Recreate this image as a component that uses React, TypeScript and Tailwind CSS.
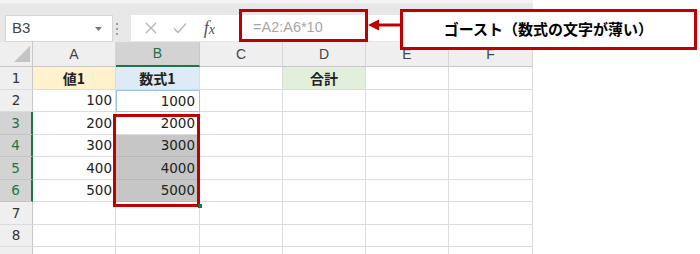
import React from "react";

const RED = "border-[#c00000]";

type Row = {
  n: number;
  h: string;
  a?: string;
  b?: string;
  d?: string;
};

const rows: Row[] = [
  { n: 1, h: "h-[23px]", a: "値1", b: "数式1", d: "合計" },
  { n: 2, h: "h-[22px]", a: "100", b: "1000" },
  { n: 3, h: "h-[23px]", a: "200", b: "2000" },
  { n: 4, h: "h-[22px]", a: "300", b: "3000" },
  { n: 5, h: "h-[23px]", a: "400", b: "4000" },
  { n: 6, h: "h-[22px]", a: "500", b: "5000" },
  { n: 7, h: "h-[23px]" },
  { n: 8, h: "h-[22px]" },
  { n: 9, h: "h-[22px]" },
];

const colHeaders = ["A", "B", "C", "D", "E", "F"];

const NameBox = () => (
  <div className="ml-[5px] mt-[12px] w-[108px] h-[27px] bg-white border border-[#d6d6d6] flex items-center justify-between pl-[6px] pr-[10px]">
    <span className="font-['Liberation_Sans',sans-serif] text-[15px] text-[#444]">B3</span>
    <svg width="7" height="4" viewBox="0 0 7 4">
      <path d="M0 0 L7 0 L3.5 4 Z" fill="#777" />
    </svg>
  </div>
);

const FormulaBar = () => (
  <div className="ml-[13px] mt-[12px] w-[397px] h-[26px] bg-white flex items-center">
    <div className="w-[92px] flex items-center justify-around pl-[6px]">
      <svg width="12" height="12" viewBox="0 0 12 12">
        <path d="M1 1 L11 11 M11 1 L1 11" stroke="#b4b4b4" strokeWidth="1.3" fill="none" />
      </svg>
      <svg width="14" height="12" viewBox="0 0 14 12">
        <path d="M1 6.5 L5 10.5 L13 1.5" stroke="#b4b4b4" strokeWidth="1.3" fill="none" />
      </svg>
      <span className="font-['Liberation_Serif',serif] italic text-[18px] text-[#555] leading-none">
        f<span className="text-[14px]">x</span>
      </span>
    </div>
    <span className="ml-[30px] font-['Liberation_Sans',sans-serif] text-[14.5px] text-[#a6a6a6]">
      =A2:A6*10
    </span>
  </div>
);

function cellClass(row: number, col: number) {
  // col: 0..5 => A..F
  let base = "border-r border-b border-[#dcdcdc] flex items-center";
  if (row === 1) {
    if (col === 0) return base + " bg-[#fff2cc] justify-center";
    if (col === 1) return base + " bg-[#ddebf7] justify-center";
    if (col === 3) return base + " bg-[#e2efda] justify-center";
    return base;
  }
  if (col === 0) return base + " justify-end pr-[3px]";
  if (col === 1) {
    if (row === 2) return "border border-[#9dc3e6] flex items-center justify-end pr-[4px]";
    if (row >= 4 && row <= 6) return "border-r border-b border-[#b8b8b8] bg-[#c6c6c6] flex items-center justify-end pr-[4px]";
    return base + " justify-end pr-[4px]";
  }
  return base;
}

export default function App() {
  return (
    <div className="relative w-[700px] h-[254px] bg-white overflow-hidden">
      <div className="w-[533px] h-[254px] flex flex-col">
        {/* toolbar */}
        <div className="h-[45px] bg-[#e7e7e7] border-t-[3px] border-[#f3f3f3] flex items-start">
          <NameBox />
          <div className="ml-[3px] mt-[20px] flex flex-col gap-[3px]">
            <div className="w-[2px] h-[2px] bg-[#a0a0a0]" />
            <div className="w-[2px] h-[2px] bg-[#a0a0a0]" />
            <div className="w-[2px] h-[2px] bg-[#a0a0a0]" />
          </div>
          <FormulaBar />
        </div>

        {/* sheet grid */}
        <div className="grid grid-cols-[33px_83px_84px_83px_83px_83px_84px] bg-white">
          {/* header row */}
          <div className="h-[25px] bg-[#efefef] border-r border-b border-[#c8c8c8] flex items-end justify-end pr-[2px] pb-[4px]">
            <svg width="16" height="16" viewBox="0 0 16 16">
              <path d="M16 0 L16 16 L0 16 Z" fill="#c4c4c4" />
            </svg>
          </div>
          {colHeaders.map((c) =>
            c === "B" ? (
              <div
                key={c}
                className="h-[25px] bg-[#d3d3d3] border-r border-[#c8c8c8] border-b-2 border-b-[#217346] flex items-center justify-center font-['Liberation_Sans',sans-serif] text-[14px] text-[#217346]"
              >
                {c}
              </div>
            ) : (
              <div
                key={c}
                className="h-[25px] bg-[#efefef] border-r border-b border-[#d6d6d6] border-b-[#c8c8c8] flex items-center justify-center font-['Liberation_Sans',sans-serif] text-[14px] text-[#444]"
              >
                {c}
              </div>
            )
          )}

          {rows.map((r) => (
            <React.Fragment key={r.n}>
              {r.n >= 3 && r.n <= 6 ? (
                <div
                  className={`${r.h} bg-[#d3d3d3] border-b border-[#c4c4c4] border-r-2 border-r-[#217346] flex items-center justify-center font-['DejaVu_Sans',sans-serif] text-[13.5px] text-[#217346]`}
                >
                  {r.n}
                </div>
              ) : (
                <div
                  className={`${r.h} bg-[#efefef] border-b border-[#dcdcdc] border-r border-r-[#c8c8c8] flex items-center justify-center font-['DejaVu_Sans',sans-serif] text-[13.5px] text-[#333]`}
                >
                  {r.n < 9 ? r.n : ""}
                </div>
              )}
              {[0, 1, 2, 3, 4, 5].map((ci) => {
                const val = ci === 0 ? r.a : ci === 1 ? r.b : ci === 3 ? r.d : undefined;
                return (
                  <div key={ci} className={`${r.h} ${cellClass(r.n, ci)}`}>
                    {val &&
                      (r.n === 1 ? (
                        <span className="font-['Noto_Sans_CJK_JP',sans-serif] font-bold text-[14px] text-[#222]">
                          {val}
                        </span>
                      ) : (
                        <span className="font-['DejaVu_Sans',sans-serif] text-[13.5px] text-[#222]">
                          {val}
                        </span>
                      ))}
                  </div>
                );
              })}
            </React.Fragment>
          ))}
        </div>
      </div>

      {/* callouts */}
      <div className={`absolute left-[239px] top-[9px] w-[129px] h-[33px] border-[3px] ${RED}`} />
      <svg className="absolute left-[367px] top-[19px]" width="34" height="12" viewBox="0 0 34 12">
        <path d="M1 6 L12 0.5 L12 11.5 Z" fill="#c00000" />
        <path d="M10 6 L34 6" stroke="#c00000" strokeWidth="3" />
      </svg>
      <div
        className={`absolute left-[400px] top-[9px] w-[297px] h-[41px] border-[3px] ${RED} bg-white flex items-center justify-center`}
      >
        <span className="font-['Noto_Sans_CJK_JP',sans-serif] font-bold text-[15px] text-black">
          ゴースト（数式の文字が薄い）
        </span>
      </div>
      <div className={`absolute left-[113px] top-[114px] w-[87px] h-[93px] border-[3px] ${RED}`} />
      <div className="absolute left-[198px] top-[204px] w-[4px] h-[4px] bg-[#217346]" />
    </div>
  );
}
